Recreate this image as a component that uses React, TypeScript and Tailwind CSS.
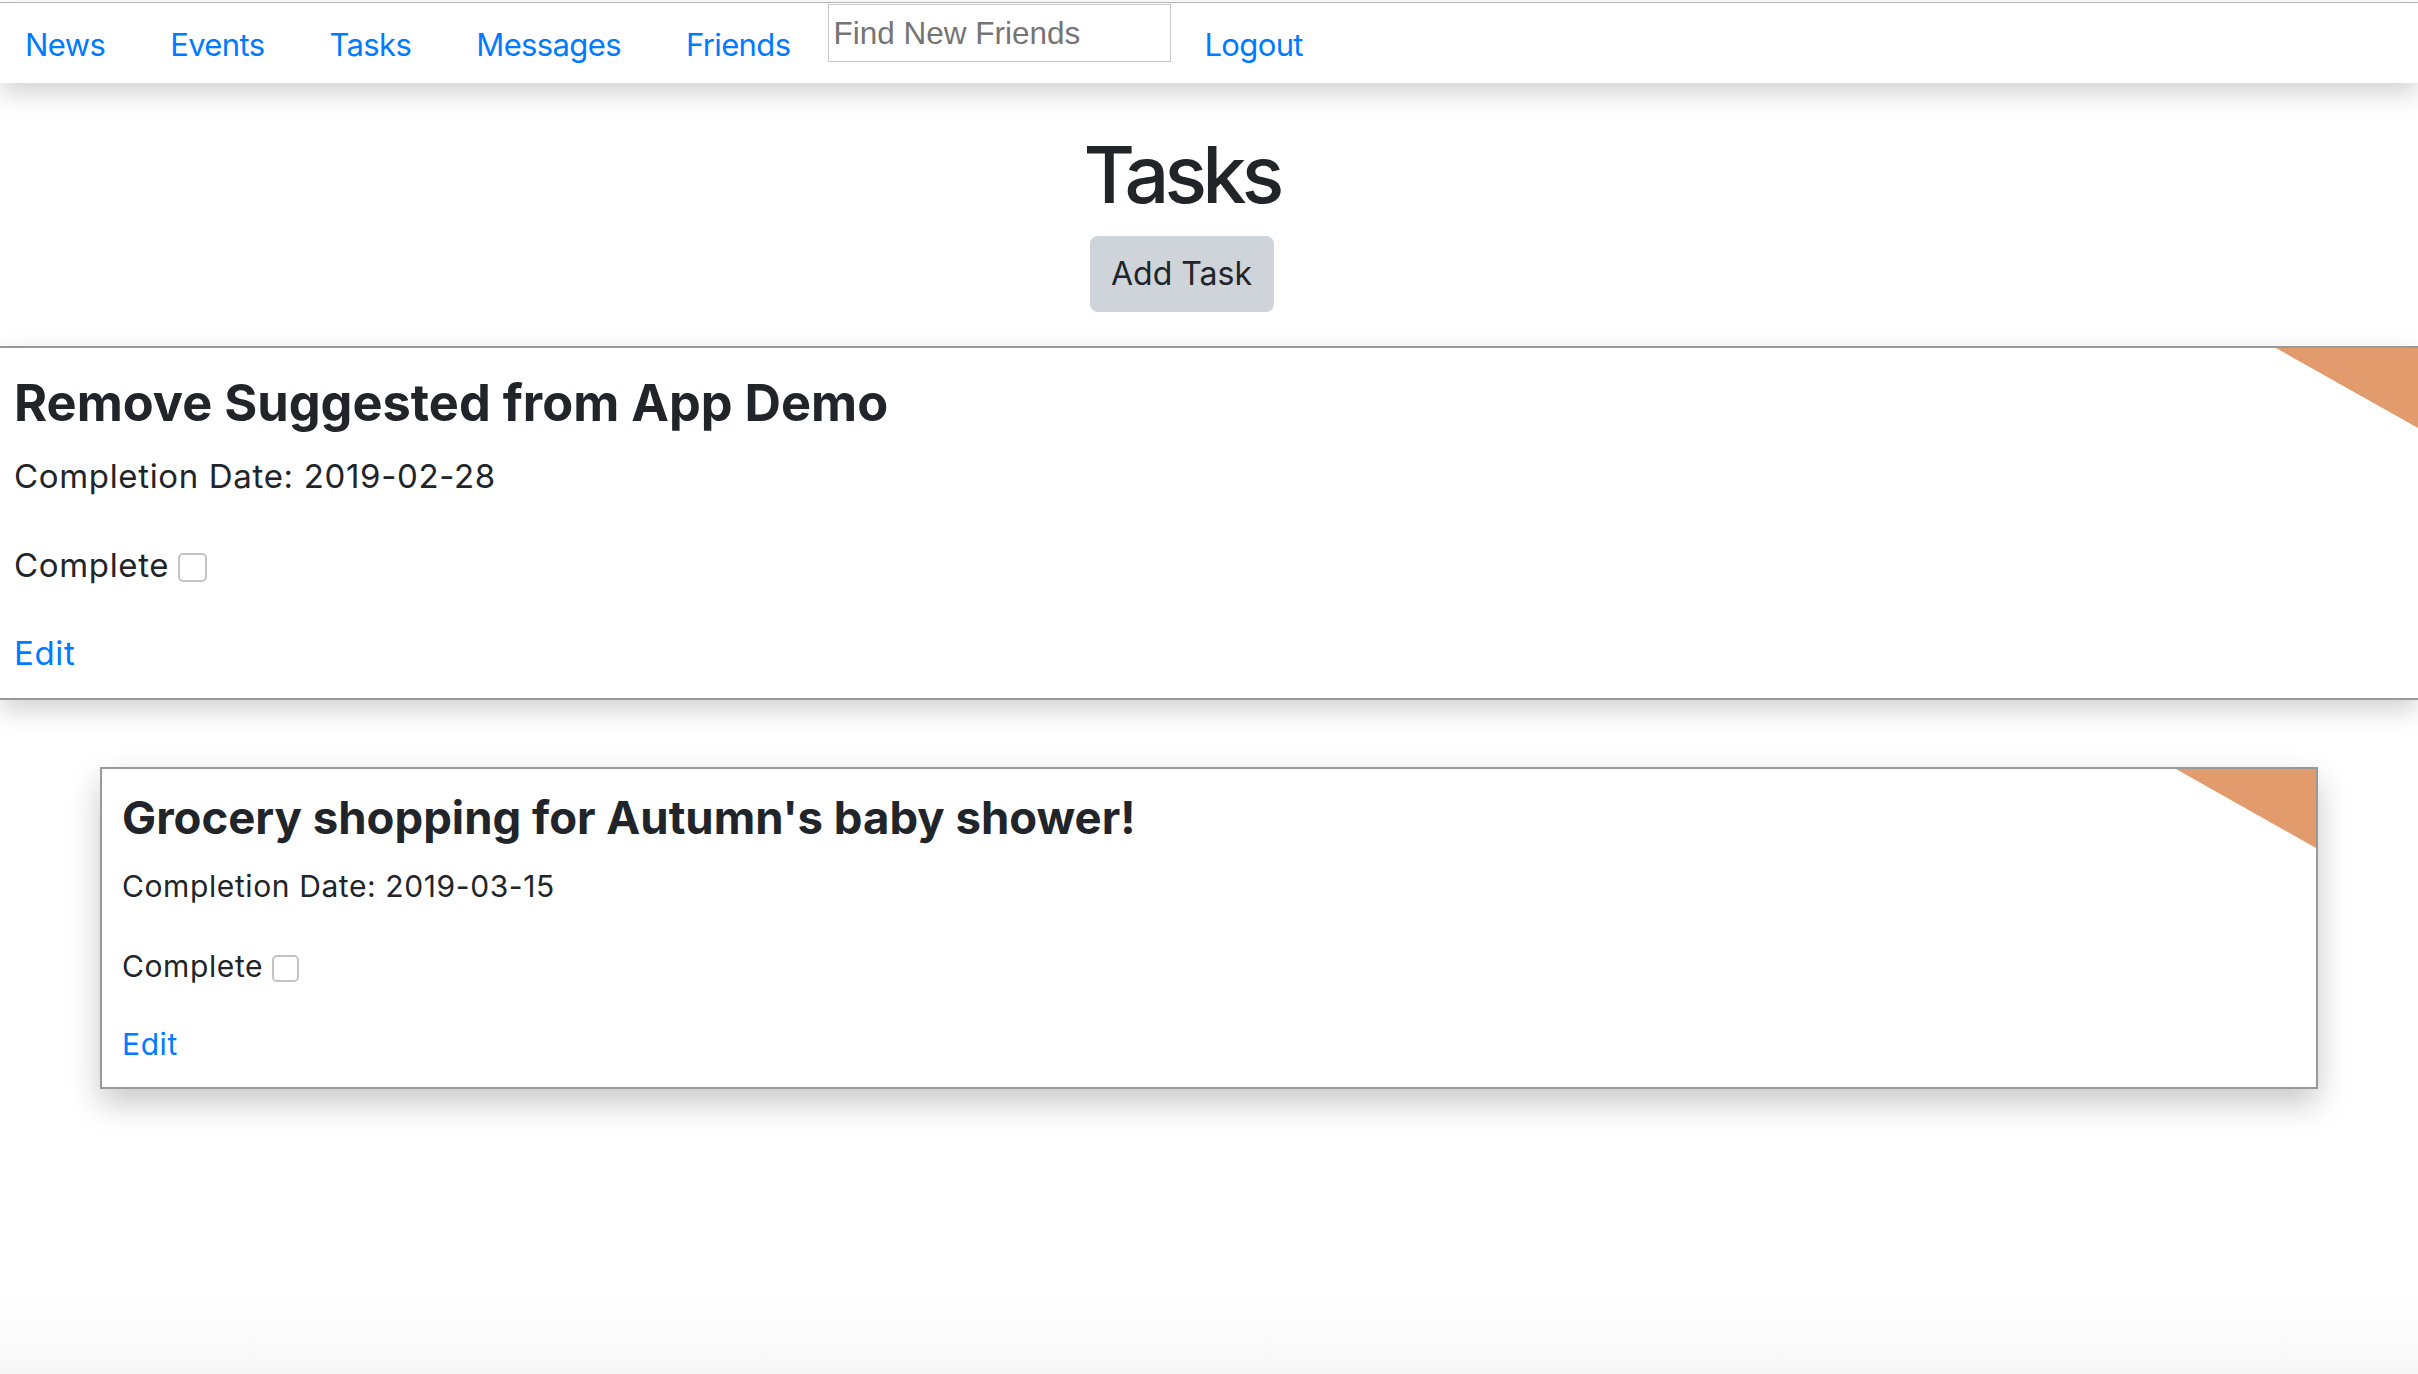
import React from "react";

interface Task {
  id: number;
  title: string;
  completionDate: string;
}

const tasks: Task[] = [
  { id: 1, title: "Remove Suggested from App Demo", completionDate: "2019-02-28" },
  { id: 2, title: "Grocery shopping for Autumn's baby shower!", completionDate: "2019-03-15" },
];

const links = ["News", "Events", "Tasks", "Messages", "Friends"];

const Corner = ({ w, h }: { w: string; h: string }) => (
  <div
    className={`absolute right-0 top-0 bg-[#e29b6c] [clip-path:polygon(0_0,100%_0,100%_100%)] ${w} ${h}`}
  />
);

const Nav = () => {
  return (
    <nav className="mt-[2px] flex h-[81px] items-start border-t border-[#b4b4b4] bg-white pl-[25px] shadow-[0_10px_24px_rgba(0,0,0,0.18)] relative z-10">
      {links.map((l) => (
        <a
          key={l}
          href="#"
          className="mr-[65px] pt-[18px] text-[31px] leading-[48px] tracking-[-0.02em] text-[#007bff] last:mr-0"
        >
          {l}
        </a>
      ))}
      <input
        type="text"
        placeholder="Find New Friends"
        className="ml-[-27px] mt-[1px] h-[58px] w-[343px] border border-[#c8c8c8] bg-white pl-[4px] font-['Liberation_Sans'] text-[31.5px] placeholder:text-[#757575] outline-none"
      />
      <a href="#" className="ml-[33px] pt-[18px] text-[31px] leading-[48px] tracking-[-0.02em] text-[#007bff]">
        Logout
      </a>
    </nav>
  );
};

const App = () => {
  return (
    <div className="min-h-[1374px] bg-linear-to-b from-white from-[94%] to-[#f7f7f7] font-['Inter',sans-serif] text-[#212529]">
      <Nav />

      <div className="flex flex-col items-center pr-[55px] pt-[43px]">
        <h1 className="text-[79px] font-medium leading-[96px] tracking-[-0.06em]">Tasks</h1>
        <button className="mt-[14px] h-[76px] w-[184px] rounded-[8px] bg-[#ced4da] text-[32px] text-[#212529]">
          Add Task
        </button>
      </div>

      {/* first task, full width */}
      <div className="relative mt-[34px] border-y-2 border-[#999] bg-white pb-[21px] pl-[14px] pt-[26px] shadow-[0_10px_24px_rgba(0,0,0,0.18)]">
        <Corner w="w-[142px]" h="h-[80px]" />
        <h4 className="text-[50.5px] font-bold leading-[58px]">{tasks[0].title}</h4>
        <p className="mt-[20px] text-[33px] leading-[48px] tracking-[0.02em]">
          Completion Date: {tasks[0].completionDate}
        </p>
        <label className="mt-[41px] flex items-center text-[33px] leading-[48px] tracking-[0.02em]">
          Complete
          <input
            type="checkbox"
            className="ml-[9px] mt-[4px] h-[29px] w-[29px] appearance-none rounded-[5px] border-2 border-[#c4c4c4] bg-white"
          />
        </label>
        <a href="#" className="mt-[40px] block text-[33px] leading-[48px] tracking-[0.02em] text-[#007bff]">
          Edit
        </a>
      </div>

      {/* second task, inset card */}
      <div className="relative mx-[100px] mt-[67px] border-2 border-[#999] bg-white pb-[20px] pl-[20px] pt-[22px] shadow-[0_14px_30px_rgba(0,0,0,0.22)]">
        <Corner w="w-[140px]" h="h-[79px]" />
        <h4 className="text-[45.5px] font-bold leading-[53px]">{tasks[1].title}</h4>
        <p className="mt-[21px] text-[30px] leading-[43.5px] tracking-[0.02em]">
          Completion Date: {tasks[1].completionDate}
        </p>
        <label className="mt-[36px] flex items-center text-[30px] leading-[43.5px] tracking-[0.02em]">
          Complete
          <input
            type="checkbox"
            className="ml-[9px] mt-[4px] h-[27px] w-[27px] appearance-none rounded-[5px] border-2 border-[#c4c4c4] bg-white"
          />
        </label>
        <a href="#" className="mt-[35px] block text-[30px] leading-[43.5px] tracking-[0.02em] text-[#007bff]">
          Edit
        </a>
      </div>
    </div>
  );
};

export default App;
